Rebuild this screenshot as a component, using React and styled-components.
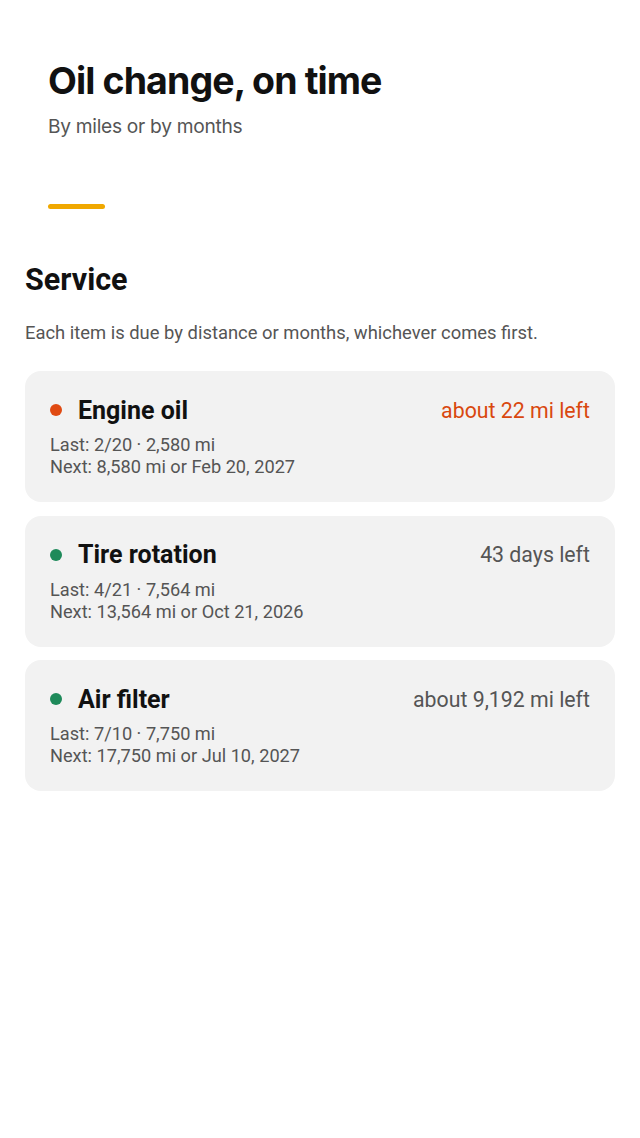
import React from "react";
import styled, { createGlobalStyle } from "styled-components";

const Global = createGlobalStyle`
  html, body { margin: 0; padding: 0; background: #ffffff; }
  body { font-family: Roboto, "Noto Sans", sans-serif; color: #111; }
  * { box-sizing: border-box; }
`;

const Page = styled.div`
  display: flex;
  flex-direction: column;
  padding: 0 25px 40px;
`;

const Hero = styled.header`
  display: flex;
  flex-direction: column;
  padding: 58px 23px 0;
`;

const Title = styled.h1`
  margin: 0;
  font-family: Inter, "Liberation Sans", sans-serif;
  font-weight: 700;
  font-size: 37.5px;
  line-height: 46px;
  letter-spacing: -0.9px;
  color: #111;
`;

const Subtitle = styled.p`
  margin: 9px 0 0;
  font-family: Inter, "Liberation Sans", sans-serif;
  font-size: 19.2px;
  line-height: 26px;
  letter-spacing: -0.3px;
  color: #555;
`;

const Accent = styled.div`
  width: 57px;
  height: 5px;
  border-radius: 3px;
  background: #f0a800;
  margin-top: 65px;
`;

const Section = styled.section`
  display: flex;
  flex-direction: column;
  margin-top: 53px;
`;

const SectionTitle = styled.h2`
  margin: 0;
  font-size: 30.5px;
  line-height: 36px;
  font-weight: 700;
  color: #111;
`;

const SectionNote = styled.p`
  margin: 23px 0 0;
  font-size: 18.4px;
  line-height: 24px;
  color: #555;
`;

const List = styled.div`
  display: flex;
  flex-direction: column;
  gap: 13.5px;
  margin-top: 26px;
`;

const Card = styled.div`
  background: #f2f2f2;
  border-radius: 16px;
  padding: 24px 25px 24px;
  display: flex;
  flex-direction: column;
  gap: 9px;
`;

const Row = styled.div`
  display: flex;
  align-items: center;
  justify-content: space-between;
  height: 30px;
`;

const Name = styled.div`
  display: flex;
  align-items: center;
  gap: 16px;
  font-size: 25px;
  font-weight: 700;
  color: #111;
`;

const Dot = styled.span`
  width: 12px;
  height: 12px;
  border-radius: 50%;
  background: ${(p) => p.$color};
`;

const Status = styled.div`
  font-size: 21.3px;
  color: ${(p) => p.$color};
`;

const Details = styled.div`
  display: flex;
  flex-direction: column;
  font-size: 18.2px;
  line-height: 22px;
  color: #555;
`;

const items = [
  {
    name: "Engine oil",
    dot: "#e04a12",
    status: "about 22 mi left",
    statusColor: "#d9480f",
    last: "Last: 2/20 · 2,580 mi",
    next: "Next: 8,580 mi or Feb 20, 2027",
  },
  {
    name: "Tire rotation",
    dot: "#1e8a5a",
    status: "43 days left",
    statusColor: "#555",
    last: "Last: 4/21 · 7,564 mi",
    next: "Next: 13,564 mi or Oct 21, 2026",
  },
  {
    name: "Air filter",
    dot: "#1e8a5a",
    status: "about 9,192 mi left",
    statusColor: "#555",
    last: "Last: 7/10 · 7,750 mi",
    next: "Next: 17,750 mi or Jul 10, 2027",
  },
];

export default function App() {
  return (
    <>
      <Global />
      <Page>
        <Hero>
          <Title>Oil change, on time</Title>
          <Subtitle>By miles or by months</Subtitle>
          <Accent />
        </Hero>
        <Section>
          <SectionTitle>Service</SectionTitle>
          <SectionNote>
            Each item is due by distance or months, whichever comes first.
          </SectionNote>
          <List>
            {items.map((it) => (
              <Card key={it.name}>
                <Row>
                  <Name>
                    <Dot $color={it.dot} />
                    {it.name}
                  </Name>
                  <Status $color={it.statusColor}>{it.status}</Status>
                </Row>
                <Details>
                  <div>{it.last}</div>
                  <div>{it.next}</div>
                </Details>
              </Card>
            ))}
          </List>
        </Section>
      </Page>
    </>
  );
}
